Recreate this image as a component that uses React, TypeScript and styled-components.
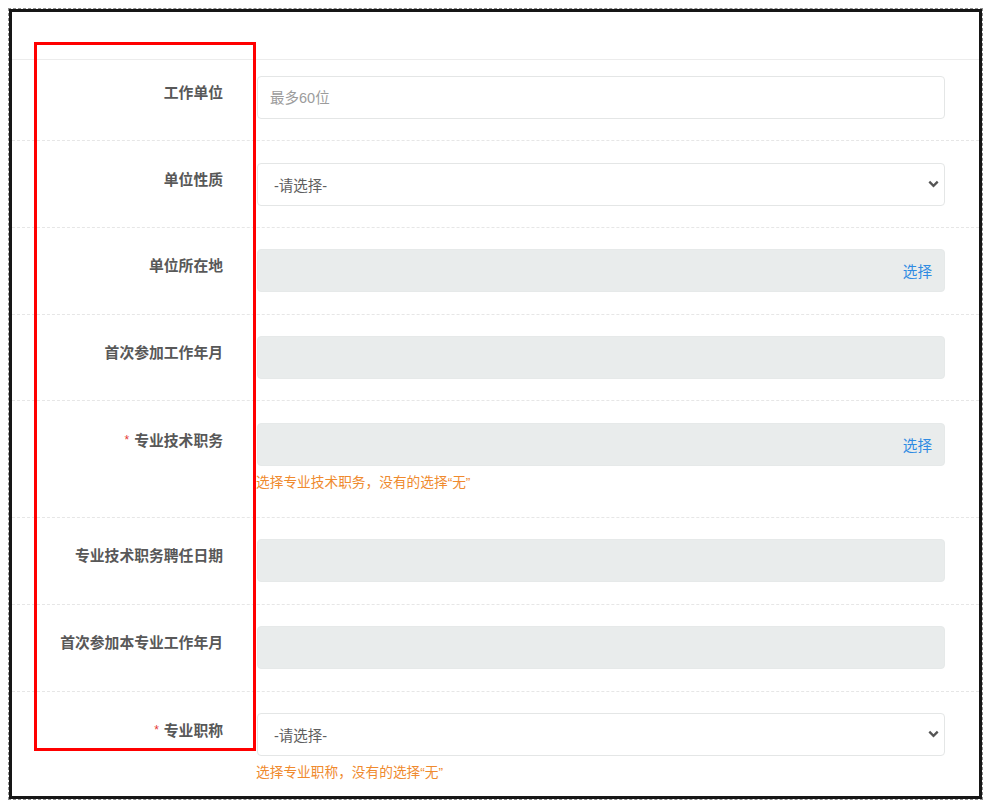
import React from "react";
import styled, { createGlobalStyle } from "styled-components";

const GlobalStyle = createGlobalStyle`
  html, body {
    margin: 0;
    padding: 0;
    background: #ffffff;
    overflow: hidden;
  }
  body {
    padding: 8px;
    font-family: "Liberation Sans", "Noto Sans CJK SC", sans-serif;
  }
  * { box-sizing: border-box; }
`;

const Outer = styled.div`
  width: 975px;
  height: 792px;
  border: 1px dashed #8c8c8c;
`;

const Frame = styled.div`
  position: relative;
  height: 100%;
  border: 3px solid #161616;
  background: #ffffff;
  overflow: hidden;
`;

const Header = styled.div`
  height: 48px;
  border-bottom: 1px solid #ececec;
`;

const Row = styled.div<{ $first?: boolean }>`
  display: grid;
  grid-template-columns: 226px 1fr;
  column-gap: 19px;
  padding: ${(p) => (p.$first ? "16px" : "21.3px")} 34px 21.4px 0;
  border-bottom: 1px dashed #e6e6e6;
`;

const Label = styled.div`
  padding: 7px 15px 0 0;
  text-align: right;
  font-size: 14.8px;
  line-height: 20px;
  font-weight: 700;
  color: #585858;
  white-space: nowrap;
`;

const Star = styled.span`
  color: #e53935;
  font-size: 12px;
  font-weight: 400;
  margin-right: 5px;
  vertical-align: 2px;
`;

const Field = styled.div`
  display: flex;
  flex-direction: column;
`;

const baseBox = `
  height: 43px;
  border: 1px solid #e4e6e6;
  border-radius: 4px;
  font-family: "Liberation Sans", "Noto Sans CJK SC", sans-serif;
  font-size: 14.5px;
`;

const TextInput = styled.input`
  ${baseBox}
  width: 100%;
  padding: 0 12px;
  background: #ffffff;
  color: #555;
  outline: none;
  &::placeholder {
    color: #9c9c9c;
  }
`;

const SelectBox = styled.div`
  ${baseBox}
  display: flex;
  align-items: center;
  justify-content: space-between;
  padding: 0 5px 0 16px;
  background: #ffffff;
  color: #5e5e5e;
`;

const ReadOnlyBox = styled.div`
  ${baseBox}
  display: flex;
  align-items: center;
  justify-content: flex-end;
  padding: 0 12px;
  background: #e9ecec;
  border-color: #e6e9e9;
`;

const PickLink = styled.span`
  color: #2f8be2;
  font-size: 14.6px;
  cursor: pointer;
`;

const Hint = styled.div`
  margin: 7px 0 3px -1px;
  font-size: 13.7px;
  line-height: 20px;
  color: #ef8a2e;
`;

const Marker = styled.div`
  position: absolute;
  left: 22px;
  top: 30px;
  width: 222px;
  height: 709px;
  border: 3px solid #ff0000;
  pointer-events: none;
`;

const Chevron = () => (
  <svg width="11" height="8" viewBox="0 0 11 8">
    <path d="M1.3 1.6 L5.5 5.8 L9.7 1.6" fill="none" stroke="#555" strokeWidth="2.3" />
  </svg>
);

type Kind = "text" | "select" | "picker" | "readonly";

interface FieldDef {
  label: string;
  kind: Kind;
  required?: boolean;
  placeholder?: string;
  hint?: string;
}

const fields: FieldDef[] = [
  { label: "工作单位", kind: "text", placeholder: "最多60位" },
  { label: "单位性质", kind: "select" },
  { label: "单位所在地", kind: "picker" },
  { label: "首次参加工作年月", kind: "readonly" },
  {
    label: "专业技术职务",
    kind: "picker",
    required: true,
    hint: "选择专业技术职务，没有的选择“无”",
  },
  { label: "专业技术职务聘任日期", kind: "readonly" },
  { label: "首次参加本专业工作年月", kind: "readonly" },
  {
    label: "专业职称",
    kind: "select",
    required: true,
    hint: "选择专业职称，没有的选择“无”",
  },
];

const Control: React.FC<{ f: FieldDef }> = ({ f }) => {
  switch (f.kind) {
    case "text":
      return <TextInput placeholder={f.placeholder} />;
    case "select":
      return (
        <SelectBox>
          <span>-请选择-</span>
          <Chevron />
        </SelectBox>
      );
    case "picker":
      return (
        <ReadOnlyBox>
          <PickLink>选择</PickLink>
        </ReadOnlyBox>
      );
    default:
      return <ReadOnlyBox />;
  }
};

export default function App() {
  return (
    <>
      <GlobalStyle />
      <Outer>
        <Frame>
          <Header />
          {fields.map((f, i) => (
            <Row key={f.label} $first={i === 0}>
              <Label>
                {f.required && <Star>*</Star>}
                {f.label}
              </Label>
              <Field>
                <Control f={f} />
                {f.hint && <Hint>{f.hint}</Hint>}
              </Field>
            </Row>
          ))}
          <Marker />
        </Frame>
      </Outer>
    </>
  );
}
